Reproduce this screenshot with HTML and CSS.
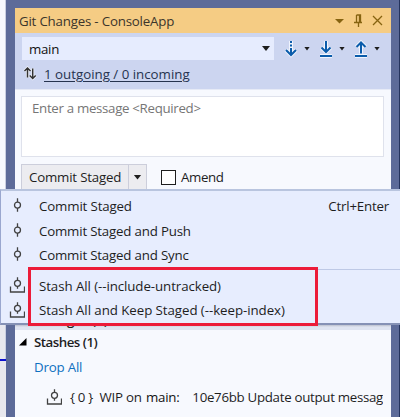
FILE: index.html
```html
<!DOCTYPE html>
<html lang="en">
<head>
<meta charset="utf-8">
<title>Git Changes - ConsoleApp</title>
<link rel="stylesheet" href="styles.css">
</head>
<body>
<svg width="0" height="0" class="defs">
  <symbol id="commit" viewBox="0 0 16 16"><path d="M8.500 .3v3.800M8.500 10v3.800" /><circle cx="8.500" cy="7.100" r="3"/></symbol>
  <symbol id="stash" viewBox="0 0 16 17"><path d="M8.500 .3v3M8.500 9.300v2.500M1.500 9.500v5.500h14v-5.500"/><circle cx="8.500" cy="6.300" r="3"/></symbol>
</svg>
<div class="window">
  <div class="gutter"><div class="gutter-top"></div><div class="gutter-bottom"></div></div>
  <main class="panel">
    <header class="titlebar">
      <h1 class="title"><span class="t-title">Git Changes - ConsoleApp</span></h1>
      <svg class="title-icons" width="50" height="14" viewBox="0 0 50 14"><path class="fill" d="M1 5h9l-4.500 4.500z"/><path d="M22.500 1h4v7M22.500 1v7M20 8.500h8M24.500 8.500v4.500M25.500 1v7"/><path d="M39 2l9 9M48 2l-9 9"/></svg>
    </header>
    <section class="branchbar">
      <div class="branch-row">
        <div class="branch"><span class="t-main">main</span><i class="caret big"></i></div>
        <svg class="git-icon" width="14" height="18" viewBox="0 0 14 18"><g class="halo"><path d="M7 1v14M2 10l5 5 5-5"/></g><path d="M7 1v2M7 4.500v2M7 8v7M2 10l5 5 5-5"/></svg>
        <i class="caret"></i>
        <svg class="git-icon" width="14" height="18" viewBox="0 0 14 18"><g class="halo"><path d="M7 1v11M2.500 7.500l4.500 4.500 4.500-4.500M1 16h12"/></g><path d="M7 1v11M2.500 7.500l4.500 4.500 4.500-4.500M1 16h12"/></svg>
        <i class="caret"></i>
        <svg class="git-icon" width="14" height="18" viewBox="0 0 14 18"><g class="halo"><path d="M7 2.500v11M2.500 7l4.500-4.500 4.500 4.500M1 16h12"/></g><path d="M7 2.500v11M2.500 7l4.500-4.500 4.500 4.500M1 16h12"/></svg>
        <i class="caret"></i>
      </div>
      <div class="sync-row">
        <svg class="sync" width="13" height="13" viewBox="0 0 13 13"><g class="halo"><path d="M3.500 10.500v-9.500M.5 4l3-3 3 3M8.700 1.500v10M5.700 8.500l3 3 3-3"/></g><path d="M3.500 10.500v-9.500M.5 4l3-3 3 3M8.700 1.500v10M5.700 8.500l3 3 3-3"/></svg>
        <a class="t-sync">1 outgoing / 0 incoming</a>
      </div>
    </section>
    <section class="compose">
      <div class="message"><span class="t-msg">Enter a message &lt;Required&gt;</span></div>
      <div class="actions">
        <div class="split"><span class="split-label"><span class="t-btn">Commit Staged</span></span><span class="split-arrow"><i class="caret big"></i></span></div>
        <i class="checkbox"></i><span class="t-amend">Amend</span>
      </div>
    </section>
    <section class="changes"><span>Changes (1)</span></section>
    <section class="stashes">
      <div class="stash-head"><svg width="8" height="8" viewBox="0 0 8 8"><path d="M7.500 0v7.500H0z"/></svg><span class="t-stashes">Stashes (1)</span></div>
      <div class="drop"><span class="t-drop">Drop All</span></div>
      <div class="stash"><svg class="glyph" width="16" height="17"><use href="#stash"/></svg><span class="t-idx">{ 0 }</span><span class="t-wip">WIP on</span><span class="t-wmain">main:</span><span class="t-hash">10e76bb Update output messag</span></div>
    </section>
  </main>
</div>
<nav class="menu">
  <div class="item"><svg class="glyph" width="16" height="16"><use href="#commit"/></svg><span class="t-m1">Commit Staged</span><span class="key t-key">Ctrl+Enter</span></div>
  <div class="item"><svg class="glyph" width="16" height="16"><use href="#commit"/></svg><span class="t-m2">Commit Staged and Push</span></div>
  <div class="item"><svg class="glyph" width="16" height="16"><use href="#commit"/></svg><span class="t-m3">Commit Staged and Sync</span></div>
  <hr>
  <div class="item"><svg class="glyph" width="16" height="17"><use href="#stash"/></svg><span class="t-m4">Stash All (--include-untracked)</span></div>
  <div class="item"><svg class="glyph" width="16" height="17"><use href="#stash"/></svg><span class="t-m5">Stash All and Keep Staged (--keep-index)</span></div>
  <div class="highlight"></div>
</nav>
</body>
</html>
```
FILE: styles.css
```css
* { box-sizing: border-box; }
body { margin: 0; width: 400px; height: 417px; overflow: hidden; position: relative; font: 13.3px/18px "Open Sans", "Noto Sans", sans-serif; color: #1e1e1e; background: #5d6b99; }
span, a { white-space: nowrap; }
.defs { position: absolute; }
.window { display: flex; height: 417px; border-right: 1px solid #24335d; }
.gutter { width: 6px; background: #f7f9fe; border-right: 1px solid #c9cee0; display: flex; flex-direction: column; flex: none; }
.gutter-top { height: 359px; background: linear-gradient(#f7f9fe 320px, #e8e8ee 326px); }
.gutter-bottom { border-top: 2px solid #0d10cf; height: 58px; background: #e8e8ee; margin-right: -1px; }
.panel { width: 376px; margin: 8px 8px 0 9px; background: #f7f9fe; overflow: hidden; flex: none; }
.titlebar { height: 25px; background: #f5cc84; display: flex; align-items: center; padding: 0 7px 0 4px; color: #3b352b; }
.title { margin: 0; flex: 1; font: inherit; }
.title-icons { fill: none; stroke: #866310; stroke-width: 1.3; }
.title-icons .fill { fill: #866310; stroke: none; }
.branchbar { height: 57px; background: #ccd5f0; padding: 4px 0 0 7px; border-bottom: 1px solid #e6eaf6; }
.branch-row { display: flex; align-items: center; height: 23px; }
.branch { flex: none; width: 252px; height: 23px; background: #e6ecfe; display: flex; align-items: center; justify-content: space-between; padding: 0 4px 0 7px; margin-right: 10px; color: #111; }
.caret { flex: none; width: 6px; height: 4px; background: #1e1e1e; clip-path: polygon(0 0, 100% 0, 50% 100%); }
.caret.big { width: 8px; height: 5px; }
.git-icon { flex: none; fill: none; stroke: #0b5cab; stroke-width: 2; margin-right: 6px; overflow: visible; }
.git-icon + .caret { margin-right: 9px; }
.halo { stroke: #f0f4fd; stroke-width: 4; }
.sync-row { display: flex; align-items: center; height: 28px; padding-left: 2px; gap: 7px; }
.sync { fill: none; stroke: #333; stroke-width: 1.5; overflow: visible; margin-top: -2px; }
.sync .halo { stroke: #f0f4fd; stroke-width: 3; }
.sync-row a { text-decoration: underline; text-underline-offset: 2px; color: #26334f; }
.compose { padding: 6px 7px 0 6px; height: 99px; }
.message { height: 61px; border: 1px solid #dfe2ec; background: #fff; padding: 2px 10px; color: #767676; }
.actions { display: flex; align-items: center; height: 26px; margin-top: 7px; }
.split { display: flex; height: 26px; width: 126px; border: 1px solid #cccedb; background: #ececf0; }
.split-label { width: 107px; border-right: 1px solid #cccedb; padding: 3px 0 0 7px; }
.split-arrow { flex: 1; display: flex; align-items: center; justify-content: center; }
.checkbox { width: 15px; height: 15px; border: 1.5px solid #1e1e1e; background: #fff; margin: 0 5px 0 14px; }
.changes { height: 141px; display: flex; align-items: flex-end; padding: 0 0 1px 19px; font-weight: 600; background: linear-gradient(#0000 132px, #a9adba 135px, #dfe4f1 138px, #dfe4f1 141px); }
.stash-head { display: flex; align-items: center; height: 24px; gap: 7px; padding-left: 4px; font-weight: 600; }
.drop { padding: 4px 0 0 19px; color: #0e70c0; }
.stash { display: flex; align-items: center; width: 368px; overflow: hidden; margin-top: 9px; padding-left: 31px; height: 24px; }
.glyph { fill: none; stroke: #424242; stroke-width: 1.3; flex: none; }
.stash .t-idx { margin-left: 8px; width: 30px; letter-spacing: -.3px; }
.stash .t-wip { width: 47px; }
.stash .t-wmain { width: 47px; color: #111; }
.t-title { letter-spacing: -.2px; }
.t-main { letter-spacing: -.3px; }
.t-msg { letter-spacing: -.32px; }
.t-btn { letter-spacing: -.2px; }
.t-amend { letter-spacing: -.4px; }
.t-stashes { letter-spacing: -.5px; }
.t-drop { letter-spacing: -.2px; }
.t-wip, .t-wmain { letter-spacing: -.25px; }
.t-hash { letter-spacing: -.3px; }
.t-m1 { letter-spacing: -.15px; }
.t-m2, .t-m3 { letter-spacing: -.19px; }
.t-m4 { letter-spacing: -.08px; }
.t-m5 { letter-spacing: -.06px; }
.t-key { letter-spacing: -.2px; }
.menu { position: absolute; left: 0; top: 189px; width: 400px; height: 136px; background: #e7edfe; border: 1px solid #9aa7cf; border-top: 2px solid #b9c5df; border-right: 0; border-bottom: 2px solid #8591b5; padding-top: 3px; }
.item { display: flex; align-items: center; height: 24.5px; padding: 0 11px 0 8px; gap: 14px; }
.key { margin-left: auto; }
.menu hr { margin: 1px 0 4px 34px; border: 0; border-top: 1px solid #bec9e6; }
.highlight { position: absolute; left: 27px; top: 76px; width: 290px; height: 59px; border: 3px solid #ec1b39; }
```
